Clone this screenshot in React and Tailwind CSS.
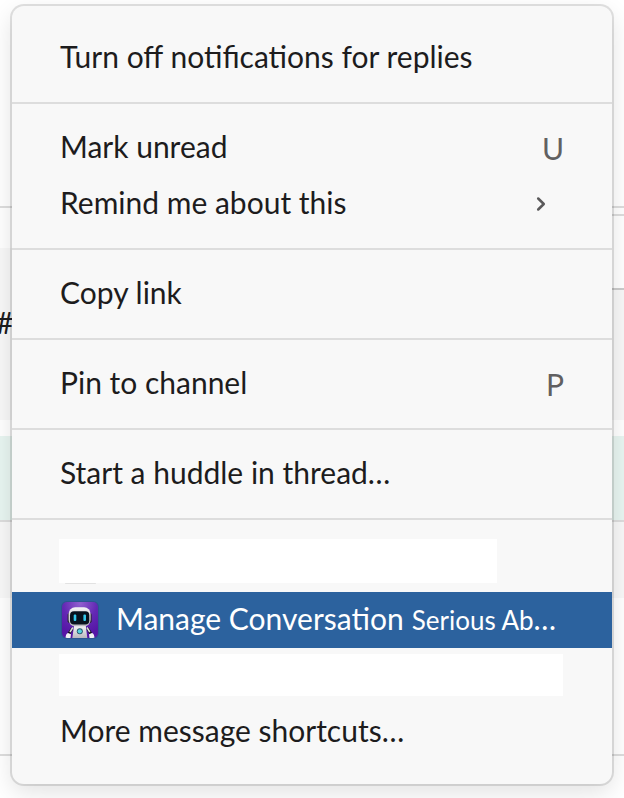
import React from "react";

function Row({ children, hint }) {
  return (
    <div className="flex h-14 items-center justify-between pl-12 pr-12">
      <span className="-mt-1 whitespace-nowrap">{children}</span>
      {hint}
    </div>
  );
}

function Key({ children }) {
  return <span className="text-[#616061]">{children}</span>;
}

function Section({ children }) {
  return <div className="border-b-2 border-[#dddddd] py-4">{children}</div>;
}

function Chevron() {
  return (
    <svg className="mr-[17px] h-4 w-3" viewBox="0 0 12 16" fill="none">
      <path d="M3.2 2.5 L8.8 8 L3.2 13.5" stroke="#5a595a" strokeWidth="2.5" strokeLinecap="round" strokeLinejoin="round" />
    </svg>
  );
}

function RobotIcon() {
  return (
    <svg className="h-10 w-10 shrink-0" viewBox="0 0 40 40">
      <defs>
        <radialGradient id="violet" cx="0.5" cy="0.05" r="0.85">
          <stop offset="0" stopColor="#9160cf" />
          <stop offset="0.55" stopColor="#6328b4" />
          <stop offset="1" stopColor="#5616a6" />
        </radialGradient>
        <linearGradient id="shell" x1="0" y1="0" x2="0" y2="1">
          <stop offset="0" stopColor="#f4f4f6" />
          <stop offset="1" stopColor="#b9b7be" />
        </linearGradient>
        <clipPath id="tile">
          <rect x="2" y="2" width="36" height="36" rx="5" />
        </clipPath>
      </defs>
      <rect x="1" y="1" width="38" height="38" rx="6" fill="#2b5590" />
      <g clipPath="url(#tile)">
        <rect x="2" y="2" width="36" height="36" fill="url(#violet)" />
        <path d="M12.5 28 L8.7 34 M27.3 28 L31.1 34" stroke="#17151f" strokeWidth="2.8" />
        <path d="M12.8 27.5 L10 32 M27 27.5 L29.8 32" stroke="#d7d6db" strokeWidth="1.6" />
        <path d="M5.5 38 Q5.8 33.5 8 33 L11 34.2 L10.5 38 Z M34.5 38 Q34.2 33.5 32 33 L29 34.2 L29.5 38 Z" fill="#f1f1f3" />
        <path d="M14 26 H25.8 L27.3 38 H12.3 Z" fill="url(#shell)" />
        <rect x="7.6" y="13" width="3.6" height="10" rx="1.8" fill="#29242f" />
        <rect x="28" y="13" width="3.6" height="10" rx="1.8" fill="#29242f" />
        <rect x="8.6" y="7.3" width="22" height="19" rx="6.5" fill="url(#shell)" />
        <rect x="10" y="11.3" width="19.3" height="13.3" rx="4" fill="#08131f" />
        <rect x="13.7" y="14.5" width="2.6" height="6.6" rx="1" fill="#35c9ed" />
        <rect x="23.4" y="14.5" width="2.6" height="6.6" rx="1" fill="#35c9ed" />
        <circle cx="19.8" cy="31.3" r="3" fill="#28566a" />
        <circle cx="19.8" cy="31.3" r="2.1" fill="#55d2e0" />
      </g>
    </svg>
  );
}

function Backdrop() {
  return (
    <div className="flex h-full flex-col bg-white">
      <div className="h-[208px] border-b-2 border-[#dddddd]" />
      <div className="flex h-[212px] flex-col">
        <div className="h-10 shrink-0" />
        <div className="flex grow bg-[#f8f8f8]">
          <div className="-ml-1 flex h-[148px] items-center">#</div>
          <div className="-mt-[34px] ml-auto h-[76px] w-24 border-y-2 border-[#dddddd] border-b-[#cbcbcb] bg-white" />
        </div>
      </div>
      <div className="h-4" />
      <div className="h-[84px] bg-[#e8f5f1]" />
      <div className="h-[78px] border-t-2 border-[#dddddd] bg-[#f8f8f8]" />
      <div className="h-[158px] border-b-2 border-[#dddddd]" />
    </div>
  );
}

export default function App() {
  return (
    <div className="relative h-[798px] w-[624px] overflow-hidden bg-white font-['Lato','Liberation_Sans',sans-serif] text-[30px] leading-[44px] text-[#1d1c1d]">
      <Backdrop />
      <div className="absolute left-3 top-1.5 w-[600px] rounded-xl bg-[#f8f8f8] py-2 shadow-[0_0_0_2px_rgba(29,28,29,0.13),0_8px_24px_rgba(0,0,0,0.12)]">
        <Section>
          <Row>Turn off notifications for replies</Row>
        </Section>
        <Section>
          <Row hint={<Key>U</Key>}>Mark unread</Row>
          <Row hint={<Chevron />}>Remind me about this</Row>
        </Section>
        <Section>
          <Row>Copy link</Row>
        </Section>
        <Section>
          <Row hint={<Key>P</Key>}>Pin to channel</Row>
        </Section>
        <Section>
          <Row>Start a huddle in thread…</Row>
        </Section>
        <div className="py-4">
          <div className="h-14 pl-[47px] pt-[3px]">
            <div className="h-11 w-[438px] bg-white" />
            <div className="ml-1.5 h-px w-[31px] rounded-full bg-[#e2e2e2]" />
          </div>
          <div className="flex h-14 items-center bg-[#2c629e] pl-12 text-white">
            <RobotIcon />
            <div className="-mt-0.5 ml-4 flex items-baseline whitespace-nowrap">
              <span>Manage Conversation</span>
              <span className="ml-2 text-[26px]">Serious Ab</span>
              <span>…</span>
            </div>
          </div>
          <div className="h-14 pl-[47px] pt-1.5">
            <div className="h-[42px] w-[504px] bg-white" />
          </div>
          <Row>More message shortcuts…</Row>
        </div>
      </div>
    </div>
  );
}
